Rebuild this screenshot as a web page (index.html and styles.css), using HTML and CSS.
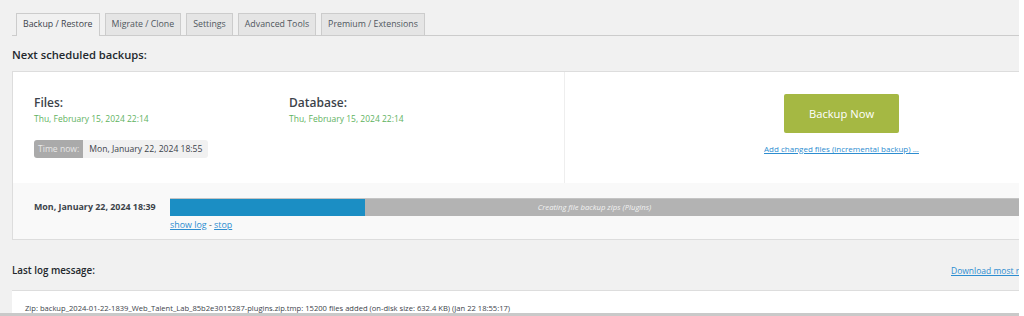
FILE: index.html
```html
<!DOCTYPE html>
<html>
<head>
<meta charset="utf-8">
<link rel="stylesheet" href="styles.css">
</head>
<body>
<div class="page">
  <div class="wrap">
    <div class="tabs">
      <span class="tab active">Backup / Restore</span>
      <span class="tab">Migrate / Clone</span>
      <span class="tab">Settings</span>
      <span class="tab">Advanced Tools</span>
      <span class="tab">Premium / Extensions</span>
    </div>
    <h2 class="heading">Next scheduled backups:</h2>
    <div class="card">
      <div class="card-top">
        <div class="schedule">
          <div class="cols">
            <div class="col">
              <div class="label">Files:</div>
              <div class="date">Thu, February 15, 2024 22:14</div>
            </div>
            <div class="col">
              <div class="label">Database:</div>
              <div class="date">Thu, February 15, 2024 22:14</div>
            </div>
          </div>
          <div class="timenow"><span class="tn-label">Time now:</span><span class="tn-value">Mon, January 22, 2024 18:55</span></div>
        </div>
        <div class="actions">
          <button class="backup-btn">Backup Now</button>
          <a class="link small" href="#">Add changed files (incremental backup) ...</a>
        </div>
      </div>
      <div class="card-bottom">
        <div class="started">Mon, January 22, 2024 18:39</div>
        <div class="progress-area">
          <div class="bar"><div class="fill" style="width:23%"></div><span class="bar-text">Creating file backup zips (Plugins)</span></div>
          <div class="bar-links"><a class="link" href="#">show log</a> - <a class="link" href="#">stop</a></div>
        </div>
      </div>
    </div>
    <div class="log-head">
      <h3 class="subheading">Last log message:</h3>
      <a class="link dl" href="#">Download most recent log file</a>
    </div>
    <div class="logbox">Zip: backup_2024-01-22-1839_Web_Talent_Lab_85b2e3015287-plugins.zip.tmp: 15200 files added (on-disk size: 632.4 KB) (Jan 22 18:55:17)</div>
  </div>
</div>
</body>
</html>
```
FILE: styles.css
```css
html, body {
  margin: 0;
  padding: 0;
  background: #ffffff;
  overflow: hidden;
}
body {
  font-family: "Open Sans", "Liberation Sans", sans-serif;
  color: #3c434a;
}
.page {
  width: 1019px;
  height: 313px;
  background: #f1f1f1;
  overflow: hidden;
  border-bottom: 3px solid #c9c9c9;
}
.wrap {
  width: 1140px;
  padding-left: 12px;
  padding-top: 13px;
}
.tabs {
  display: flex;
  gap: 5px;
  padding-left: 4px;
  border-bottom: 1px solid #cccccc;
  height: 22px;
  width: 1007px;
  box-sizing: content-box;
}
.tab {
  display: block;
  height: 22px;
  box-sizing: border-box;
  border: 1px solid #cccccc;
  border-bottom: none;
  background: #e5e5e5;
  font-size: 8.8px;
  font-weight: 500;
  line-height: 21px;
  padding: 0 6px;
  color: #50575e;
  white-space: nowrap;
}
.tab.active {
  background: #f1f1f1;
  height: 23px;
  color: #3c434a;
}
.heading {
  margin: 10px 0 8px;
  font-size: 11.2px;
  font-weight: 600;
  color: #23282d;
  line-height: 17px;
}
.subheading {
  margin: 0;
  font-size: 9.8px;
  font-weight: 600;
  color: #23282d;
  line-height: 17px;
}
.card {
  width: 1120px;
  border: 1px solid #dddddd;
  background: #ffffff;
}
.card-top {
  display: flex;
  height: 111px;
}
.schedule {
  flex: 0 0 552px;
  border-right: 1px solid #eeeeee;
  padding: 22px 0 0 21px;
  box-sizing: border-box;
}
.cols {
  display: flex;
}
.col {
  width: 255px;
}
.label {
  font-size: 12px;
  font-weight: 600;
  color: #3c434a;
  line-height: 17px;
}
.date {
  font-size: 8.5px;
  color: #5fb35f;
  line-height: 14px;
  margin-top: 1px;
}
.timenow {
  display: inline-flex;
  margin-top: 14px;
  height: 18px;
  border-radius: 3px;
  overflow: hidden;
  font-size: 8.6px;
  line-height: 18px;
}
.tn-label {
  background: #aaaaaa;
  color: #e8e8e8;
  padding: 0 4px;
}
.tn-value {
  background: #f1f1f1;
  color: #3c434a;
  padding: 0 6px;
}
.actions {
  flex: 0 0 553px;
  display: flex;
  flex-direction: column;
  align-items: center;
  padding-top: 22px;
  box-sizing: border-box;
}
.backup-btn {
  width: 115px;
  height: 39px;
  border: none;
  border-radius: 2px;
  background: #a5b843;
  color: #ffffff;
  font-family: "Open Sans", "Liberation Sans", sans-serif;
  font-size: 11.2px;
  padding: 0;
}
.link {
  color: #2d8dd0;
  text-decoration: underline;
}
.small {
  font-size: 8px;
  margin-top: 10px;
  line-height: 12px;
}
.card-bottom {
  display: flex;
  background: #f9f9f9;
  height: 56px;
  padding-top: 15px;
  box-sizing: border-box;
}
.started {
  flex: 0 0 157px;
  box-sizing: border-box;
  padding-left: 21px;
  font-size: 8.9px;
  font-weight: 700;
  color: #3c434a;
  line-height: 18px;
}
.progress-area {
  flex: 0 0 849px;
}
.bar {
  position: relative;
  height: 17px;
  background: #b3b3b3;
  border-top: 1px solid #c4c4c4;
}
.fill {
  height: 17px;
  background: #1b8ec4;
}
.bar-text {
  position: absolute;
  left: 0;
  right: 0;
  top: 0;
  text-align: center;
  font-size: 7.7px;
  font-style: italic;
  color: #f2f2f2;
  line-height: 17px;
}
.bar-links {
  font-size: 8.9px;
  line-height: 14px;
  margin-top: 2px;
  color: #555;
}
.log-head {
  display: flex;
  justify-content: space-between;
  align-items: flex-end;
  width: 1007px;
  margin-top: 22px;
}
.dl {
  font-size: 8.5px;
  width: 68px;
  overflow: hidden;
  white-space: nowrap;
  line-height: 14px;
  margin-bottom: 1px;
}
.logbox {
  margin-top: 11px;
  width: 1007px;
  box-sizing: border-box;
  background: #ffffff;
  border-top: 1px solid #dddddd;
  padding: 12px 13px;
  font-size: 7.6px;
  color: #3c434a;
  white-space: nowrap;
  height: 40px;
}
```
